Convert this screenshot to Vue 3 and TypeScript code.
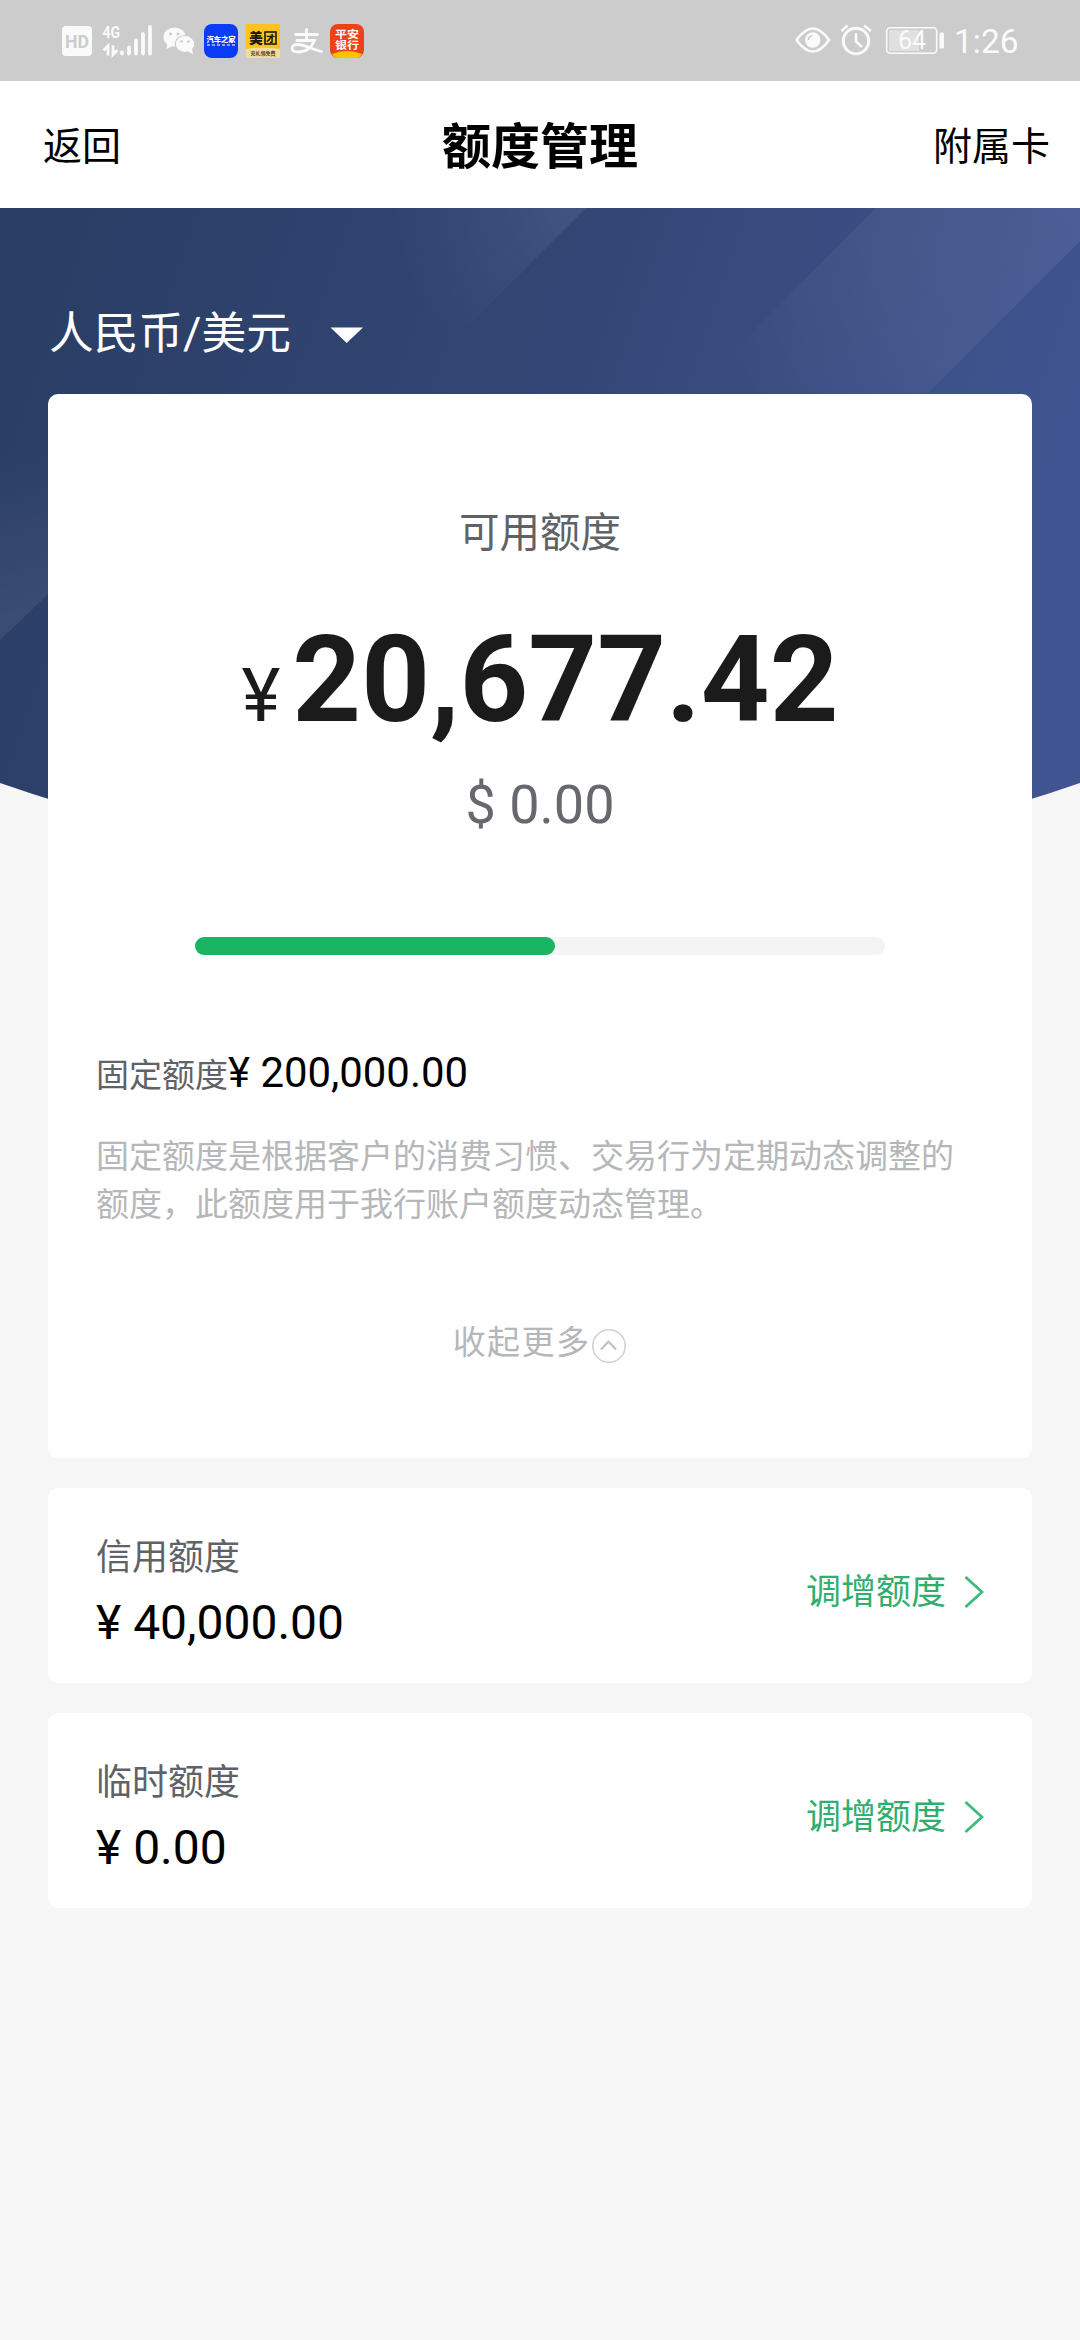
<script setup lang="ts">
interface LimitRow {
  label: string
  amount: string
  action: string
}

const rows: LimitRow[] = [
  { label: '信用额度', amount: '¥ 40,000.00', action: '调增额度' },
  { label: '临时额度', amount: '¥ 0.00', action: '调增额度' },
]

const usedPercent = 52.2
</script>

<template>
  <div class="page">
    <div class="status">
      <svg class="status-left" width="330" height="81" viewBox="0 0 330 81">
        <!-- HD -->
        <rect x="22" y="26" width="30" height="30" rx="4" fill="#fafafa" />
        <text x="37" y="48" class="s-hd" text-anchor="middle" textLength="24" lengthAdjust="spacingAndGlyphs">HD</text>
        <!-- network -->
        <text x="62.500" y="38" class="s-4g" textLength="17.500" lengthAdjust="spacingAndGlyphs">4G</text>
        <g stroke="#fafafa" fill="none">
          <path d="M63.500 50.500l4.500-4.500v9.500" stroke-width="2.800" />
          <path d="M73 45.500v9l4.500-4.500" stroke-width="2.800" />
          <g stroke-width="3.800" stroke-linecap="round">
            <path d="M82 52.500v1M89 47.500v6M96 40.500v13M103 34v19.500M110 27v26.500" />
          </g>
        </g>
        <!-- WeChat -->
        <g fill="#fafafa">
          <ellipse cx="134.500" cy="37" rx="11" ry="9.500" />
          <path d="M127.500 43l-1 6 6-3z" />
          <ellipse cx="145" cy="44" rx="9.800" ry="8.500" stroke="#cccccc" stroke-width="1.200" />
          <path d="M148 51.500l5 2.500-1-5.500z" />
        </g>
        <g fill="#cccccc">
          <circle cx="130.500" cy="34" r="1.500" /><circle cx="138" cy="34" r="1.500" />
          <circle cx="141.500" cy="41.500" r="1.300" /><circle cx="148.500" cy="41.500" r="1.300" />
        </g>
        <!-- Autohome -->
        <rect x="164" y="24" width="34" height="34" rx="8" fill="#0a3cf5" />
        <text x="181" y="42" class="s-auto" text-anchor="middle">汽车之家</text>
        <path d="M167 45h28" stroke="#b9c9ff" stroke-width="1.500" stroke-dasharray="3 2" />
        <!-- Meituan -->
        <rect x="206" y="24" width="34" height="34" fill="#fdc21c" />
        <path d="M206 49q17-3 34 0v9h-34z" fill="#f3dca0" />
        <text x="216" y="43" class="s-mt" text-anchor="middle">美</text>
        <rect x="225" y="32" width="11" height="12" fill="none" stroke="#1b1710" stroke-width="1.600" />
        <text x="230.500" y="41.500" class="s-cai" text-anchor="middle">才</text>
        <text x="223" y="55" class="s-mts" text-anchor="middle">充礼领免费</text>
        <!-- Alipay -->
        <g fill="none" stroke="#fafafa" stroke-width="2.800" stroke-linecap="round">
          <path d="M255.500 34.500h22M266.500 29.500v10.500M257 40.500h17.500C271 49 264 52 258 52c-8 0-7.500-7.500-.5-7.500 8 0 14 5 24 7" />
        </g>
        <!-- Ping An Bank -->
        <rect x="290" y="24" width="34" height="34" rx="8" fill="#ee4118" />
        <path d="M292 54q15-6 30 0q-2 4-6 4h-18q-4 0-6-4z" fill="#ffc400" />
        <text x="295" y="38" class="s-pa" textLength="24" lengthAdjust="spacingAndGlyphs">平安</text>
        <text x="295" y="48.500" class="s-pa" textLength="24" lengthAdjust="spacingAndGlyphs">银行</text>
      </svg>
      <svg width="290" height="81" viewBox="0 0 290 81">
        <g fill="none" stroke="#fafafa">
          <path d="M6.500 40Q23 17 39 40Q23 63 6.500 40Z" stroke-width="2.600" stroke-linejoin="round" />
          <circle cx="66" cy="41" r="12.700" stroke-width="3" />
          <path d="M66 33v8.500l6 5.500" stroke-width="2.600" />
          <path d="M51.500 31l6-5.500M74 25.500l7 5.500" stroke-width="2.800" />
          <rect x="96.700" y="27.700" width="50" height="25.600" rx="3.500" stroke-width="1.600" />
        </g>
        <circle cx="22.700" cy="40" r="7.700" fill="#fafafa" />
        <path d="M18.500 40a4 4 0 0 1 4-4" fill="none" stroke="#cccccc" stroke-width="1.600" />
        <rect x="99" y="30" width="30" height="21" fill="#e0e0e0" />
        <rect x="149.500" y="32.500" width="4.500" height="16" rx="1.500" fill="#fafafa" />
        <text x="122" y="49" class="s-bat" text-anchor="middle">64</text>
        <text x="164" y="53" class="s-time" textLength="64.500" lengthAdjust="spacingAndGlyphs">1:26</text>
      </svg>
    </div>

    <header class="nav">
      <span class="nav-side">返回</span>
      <h1>额度管理</h1>
      <span class="nav-side end">附属卡</span>
    </header>

    <main class="stack">
      <svg class="hero" width="1080" height="720" viewBox="0 208 1080 720">
        <defs>
          <linearGradient id="base" gradientUnits="userSpaceOnUse" x1="60" y1="300" x2="1010" y2="620">
            <stop offset="0" stop-color="#2b3e66" />
            <stop offset="0.5" stop-color="#334776" />
            <stop offset="1" stop-color="#405491" />
          </linearGradient>
          <radialGradient id="bandA" gradientUnits="userSpaceOnUse" cx="590" cy="200" r="200">
            <stop offset="0" stop-color="#fff" stop-opacity="0.08" />
            <stop offset="1" stop-color="#fff" stop-opacity="0" />
          </radialGradient>
          <radialGradient id="bandB" gradientUnits="userSpaceOnUse" cx="1090" cy="190" r="420">
            <stop offset="0" stop-color="#fff" stop-opacity="0.07" />
            <stop offset="0.55" stop-color="#fff" stop-opacity="0.05" />
            <stop offset="1" stop-color="#fff" stop-opacity="0" />
          </radialGradient>
          <linearGradient id="bandC" gradientUnits="userSpaceOnUse" x1="0" y1="450" x2="30" y2="620">
            <stop offset="0" stop-color="#fff" stop-opacity="0" />
            <stop offset="1" stop-color="#fff" stop-opacity="0.07" />
          </linearGradient>
          <clipPath id="curve"><path d="M0 208H1080V783Q540 970 0 783Z" /></clipPath>
        </defs>
        <g clip-path="url(#curve)">
          <rect y="208" width="1080" height="720" fill="url(#base)" />
          <path d="M300 208H586L400 394H300Z" fill="url(#bandA)" />
          <path d="M876 208H1080V241L927 394H690Z" fill="url(#bandB)" />
          <path d="M0 440H210L0 640Z" fill="url(#bandC)" />
        </g>
      </svg>

      <div class="content">
        <div class="currency">
          <span>人民币/美元</span>
          <svg width="34" height="17" viewBox="0 0 34 17"><path d="M0.500 0.500H33L16.700 16Z" fill="#fff" /></svg>
        </div>

        <section class="card main">
          <p class="avail">可用额度</p>
          <p class="amount"><span class="yen">¥</span>20,677.42</p>
          <p class="usd">$ 0.00</p>
          <div class="track"><div class="fill" :style="{ width: usedPercent + '%' }"></div></div>
          <p class="fixed"><span>固定额度</span>¥ 200,000.00</p>
          <p class="desc">固定额度是根据客户的消费习惯、交易行为定期动态调整的额度，此额度用于我行账户额度动态管理。</p>
          <div class="fold">
            <span>收起更多</span>
            <svg width="36" height="36" viewBox="0 0 36 36" fill="none">
              <circle cx="18" cy="18" r="16.200" stroke="#d0d2d4" stroke-width="1.600" />
              <path d="M10 21.500L17.500 13.500L25 21.500" stroke="#c0c2c4" stroke-width="2.200" />
            </svg>
          </div>
        </section>

        <section v-for="row in rows" :key="row.label" class="card row">
          <div>
            <p class="row-label">{{ row.label }}</p>
            <p class="row-amount">{{ row.amount }}</p>
          </div>
          <div class="action">
            <span>{{ row.action }}</span>
            <svg width="20" height="34" viewBox="0 0 20 34" fill="none">
              <path d="M1.500 2L18 17L1.500 32" stroke="#3dbb7b" stroke-width="2.800" />
            </svg>
          </div>
        </section>
      </div>
    </main>
  </div>
</template>

<style>
body {
  background: #f6f6f6;
}
</style>

<style scoped>
.page {
  width: 1080px;
  min-height: 2340px;
  background: #f6f6f6;
  font-family: Roboto, 'Noto Sans CJK SC', sans-serif;
  color: #000;
}
p,
h1 {
  margin: 0;
}
svg {
  display: block;
}
.status {
  display: flex;
  justify-content: space-between;
  height: 81px;
  padding-left: 40px;
  background: #cccccc;
}
.s-hd {
  font: 700 18px Roboto, sans-serif;
  fill: #cccccc;
}
.s-4g {
  font: 700 17px Roboto, sans-serif;
  fill: #fafafa;
}
.s-auto {
  font: 900 7.300px 'Noto Sans CJK SC', sans-serif;
  fill: #fff;
}
.s-mt {
  font: 900 13.500px 'Noto Sans CJK SC', sans-serif;
  fill: #1b1710;
}
.s-cai {
  font: 900 9px 'Noto Sans CJK SC', sans-serif;
  fill: #1b1710;
}
.s-mts {
  font: 700 5px 'Noto Sans CJK SC', sans-serif;
  fill: #4a3c20;
}
.s-pa {
  font: 700 10.500px 'Noto Sans CJK SC', sans-serif;
  fill: #fff;
}
.s-bat {
  font: 400 25px Roboto, sans-serif;
  fill: #fafafa;
}
.s-time {
  font: 400 34px Roboto, sans-serif;
  fill: #fafafa;
}
.nav {
  display: grid;
  grid-template-columns: 1fr auto 1fr;
  align-items: center;
  height: 127px;
  padding: 5px 30px 0 43px;
  box-sizing: border-box;
  background: #fff;
}
.nav h1 {
  margin: 2px 0 0 -13px;
  font-size: 49px;
  line-height: 60px;
  font-weight: 700;
}
.nav-side {
  font-size: 39px;
  line-height: 60px;
}
.end {
  text-align: right;
}
.stack {
  display: grid;
}
.hero,
.content {
  grid-area: 1 / 1;
}
.content {
  z-index: 1;
  display: flex;
  flex-direction: column;
  padding: 0 48px;
}
.currency {
  display: flex;
  align-items: center;
  gap: 39px;
  height: 186px;
  padding: 66px 0 0 1px;
  box-sizing: border-box;
  font-size: 44.700px;
  line-height: 60px;
  color: #fff;
}
.currency svg {
  margin-top: 3px;
}
.card {
  border-radius: 10px;
  background: #fff;
}
.main {
  display: flex;
  flex-direction: column;
  align-items: center;
  height: 1064px;
  padding: 109px 48px 0;
  box-sizing: border-box;
}
.avail {
  font-size: 40.500px;
  line-height: 60px;
  color: #5f6266;
}
.amount {
  margin-top: 47px;
  font-size: 120px;
  line-height: 140px;
  font-weight: 700;
  color: #1b1b1b;
}
.yen {
  margin-right: 12px;
  font-size: 74px;
  font-weight: 400;
  line-height: 1;
}
.usd {
  margin-top: 22px;
  font-size: 54px;
  line-height: 66px;
  color: #65696e;
}
.track {
  width: 690px;
  height: 18px;
  margin-top: 99px;
  border-radius: 9px;
  background: #f4f4f4;
}
.fill {
  height: 18px;
  border-radius: 9px;
  background: #1ab563;
}
.fixed {
  align-self: stretch;
  margin-top: 88px;
  font-size: 41.900px;
  line-height: 60px;
}
.fixed span {
  font-size: 33px;
  color: #5f6266;
}
.desc {
  align-self: stretch;
  margin-top: 27px;
  font-size: 33px;
  line-height: 48px;
  color: #b5b7b9;
}
.fold {
  display: flex;
  align-items: center;
  gap: 1px;
  margin-top: 90px;
  font-size: 33px;
  line-height: 48px;
  letter-spacing: 1.400px;
  color: #b5b7b9;
}
.fold svg {
  margin-top: 5px;
}
.row {
  display: flex;
  justify-content: space-between;
  height: 195px;
  margin-top: 30px;
  padding: 45px 48px 0;
  box-sizing: border-box;
}
.row-label {
  font-size: 36px;
  line-height: 50px;
  color: #5f6266;
}
.row-amount {
  margin-top: 12px;
  font-size: 48px;
  line-height: 56px;
}
.action {
  display: flex;
  align-items: center;
  gap: 18px;
  height: 110px;
  font-size: 35px;
  color: #2fae70;
}
.action svg {
  margin-top: 8px;
}
</style>
